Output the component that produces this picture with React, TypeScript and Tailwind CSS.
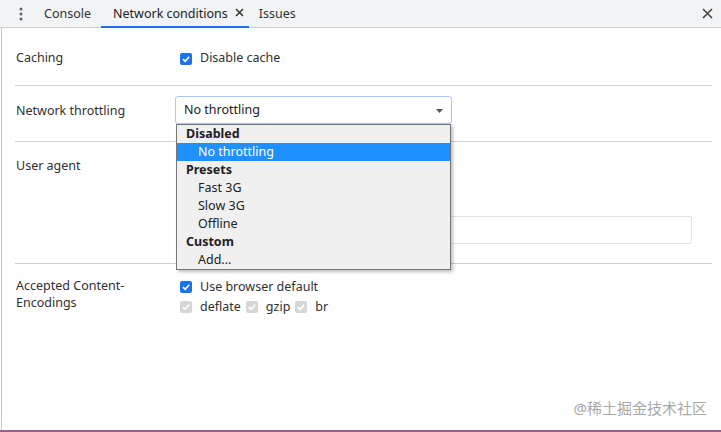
import React from "react";

const font = { fontFamily: '"Noto Sans", "Noto Sans CJK SC", sans-serif' };

function Check({ disabled = false }: { disabled?: boolean }) {
  return (
    <span
      className={
        "inline-flex h-[12px] w-[12px] shrink-0 items-center justify-center rounded-[2px] " +
        (disabled ? "bg-[#d6d6d6]" : "bg-[#1a73e8]")
      }
    >
      <svg width="10" height="10" viewBox="0 0 10 10">
        <path d="M2 5.2 L4.2 7.3 L8.2 2.8" fill="none" stroke="#fff" strokeWidth="1.7" />
      </svg>
    </span>
  );
}

const options: { label: string; header?: boolean; selected?: boolean }[] = [
  { label: "Disabled", header: true },
  { label: "No throttling", selected: true },
  { label: "Presets", header: true },
  { label: "Fast 3G" },
  { label: "Slow 3G" },
  { label: "Offline" },
  { label: "Custom", header: true },
  { label: "Add..." },
];

export default function App() {
  return (
    <div className="relative h-[432px] w-[721px] overflow-hidden bg-white text-[12.5px] text-[#303030]" style={font}>
      {/* tab strip */}
      <div className="flex h-[28px] items-center border-b border-[#cacdd1] bg-[#f1f3f4] text-[#333]">
        <div className="flex w-[40px] shrink-0 justify-center pl-[1px]">
          <svg width="4" height="14" viewBox="0 0 4 14">
            <circle cx="2" cy="2" r="1.5" fill="#5f6368" />
            <circle cx="2" cy="7" r="1.5" fill="#5f6368" />
            <circle cx="2" cy="12" r="1.5" fill="#5f6368" />
          </svg>
        </div>
        <div className="flex h-full items-center pl-[4px] pt-[2px]">Console</div>
        <div className="relative ml-[10px] flex h-full items-center gap-[7px] pl-[12px] pr-[5px] pt-[2px] text-[#202124]">
          <span>Network conditions</span>
          <svg width="9" height="9" viewBox="0 0 9 9" className="-mt-[5px]">
            <path d="M1 1 L8 8 M8 1 L1 8" stroke="#333" strokeWidth="1.5" />
          </svg>
          <div className="absolute bottom-[-1px] left-0 right-0 h-[2px] bg-[#1a73e8]" />
        </div>
        <div className="ml-[10px] flex h-full items-center pt-[2px]">Issues</div>
        <div className="flex-1" />
        <div className="flex w-[26px] justify-center pr-[2px]">
          <svg width="11" height="11" viewBox="0 0 11 11">
            <path d="M1 1 L10 10 M10 1 L1 10" stroke="#444" strokeWidth="1.6" />
          </svg>
        </div>
      </div>

      {/* panel */}
      <div className="ml-[1px] h-[404px] border-l border-[#c8c8c8] pl-[13px] pr-[9px]">
        <div className="flex h-[58px] items-center border-b border-[#d0d0d0] pt-[4px]">
          <div className="w-[165px] shrink-0 pl-[1px]">Caching</div>
          <label className="flex items-center gap-[8px]">
            <Check />
            <span>Disable cache</span>
          </label>
        </div>

        <div className="flex h-[56px] items-start border-b border-[#d0d0d0] pt-[10px]">
          <div className="flex h-[28px] w-[160px] shrink-0 items-center pl-[1px] pt-[3px]">Network throttling</div>
          <div className="flex h-[28px] w-[277px] items-center justify-between rounded-[3px] border border-[#a8c7f5] pl-[8px] pr-[8px] pt-[1px] text-[#202124]">
            <span>No throttling</span>
            <svg width="7" height="4" viewBox="0 0 7 4">
              <path d="M0 0 L7 0 L3.5 4 Z" fill="#555" />
            </svg>
          </div>
        </div>

        <div className="flex h-[122px] items-start border-b border-[#d0d0d0] pt-[15px]">
          <div className="w-[165px] shrink-0 pl-[1px]">User agent</div>
          <div className="flex flex-1 flex-col pr-[20px] pt-[59px]">
            <div className="h-[28px] w-full rounded-[2px] border border-[#e4e4e4]" />
          </div>
        </div>

        <div className="flex items-start pt-[13px] leading-[17px]">
          <div className="w-[165px] shrink-0 pl-[1px]">
            <div>Accepted Content-</div>
            <div>Encodings</div>
          </div>
          <div className="flex flex-col gap-[3px] pt-[1px]">
            <label className="flex items-center gap-[8px]">
              <Check />
              <span>Use browser default</span>
            </label>
            <div className="flex items-center text-[#303030]">
              <Check disabled />
              <span className="ml-[8px] mr-[5px]">deflate</span>
              <Check disabled />
              <span className="ml-[8px] mr-[5px]">gzip</span>
              <Check disabled />
              <span className="ml-[8px]">br</span>
            </div>
          </div>
        </div>
      </div>

      {/* open select popup */}
      <div className="absolute left-[176px] top-[124px] w-[275px] border border-[#767676] bg-[#f0f0f0] text-[12.5px] text-[#202124] shadow-[2px_2px_3px_rgba(0,0,0,0.25)]">
        {options.map((o) => (
          <div
            key={o.label}
            className={
              "flex h-[18px] items-center pt-[1px] " +
              (o.header ? "pl-[9px] font-bold" : "pl-[21px]") +
              (o.selected ? " bg-[#1e90ff] text-white" : "")
            }
          >
            {o.label}
          </div>
        ))}
      </div>

      <div className="absolute bottom-[13px] right-[14px] text-[15px] text-[#a8a8a8]" style={font}>
        @稀土掘金技术社区
      </div>
      <div className="absolute bottom-0 left-0 h-[2px] w-full bg-[#a0608e]" />
    </div>
  );
}
